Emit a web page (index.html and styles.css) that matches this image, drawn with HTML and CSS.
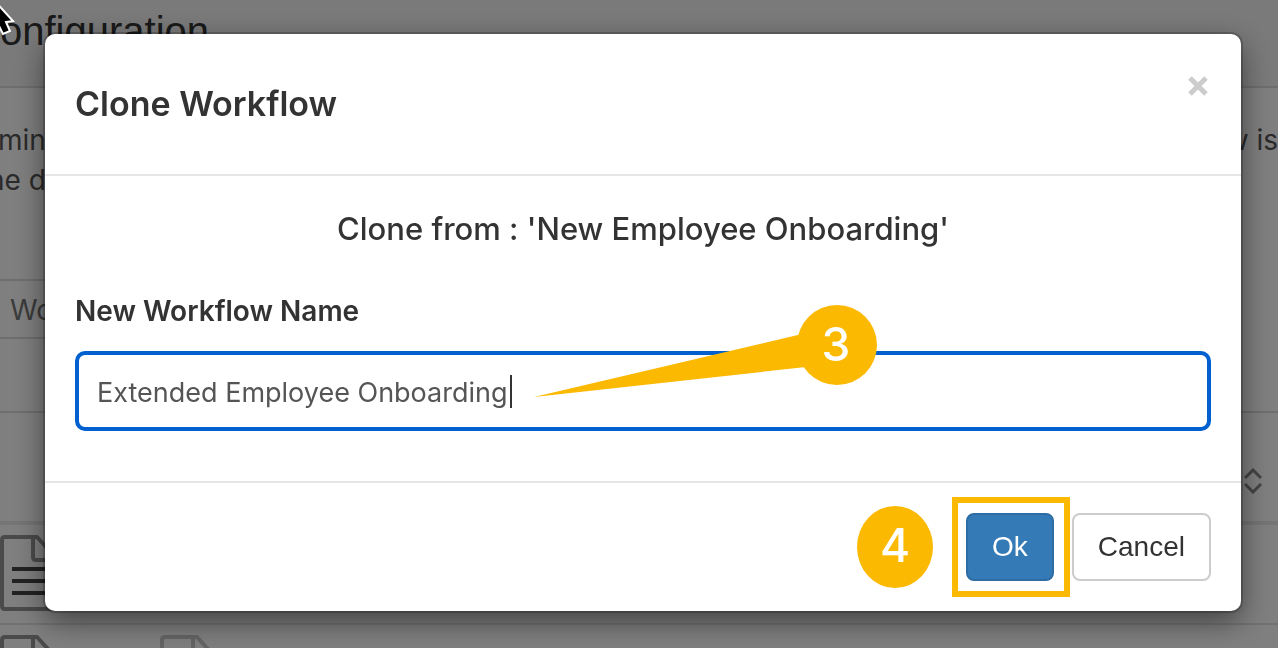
FILE: index.html
```html
<!DOCTYPE html>
<html lang="en">
<head>
    <meta charset="UTF-8">
    <meta name="viewport" content="width=device-width, initial-scale=1.0">
    <title>Workflow Configuration</title>
    <link rel="stylesheet" href="styles.css">
</head>
<body>

    <!-- Page behind the dialog -->
    <div class="page" aria-hidden="true">
        <header class="page-header">
            <h1>onfiguration</h1>
        </header>
        <div class="intro">
            <p>min<br>he d</p>
            <p>w is</p>
        </div>
        <div class="filter">Wo</div>
        <div class="list-head">
            <svg width="18" height="26" viewBox="0 0 18 26" fill="none" stroke="#888" stroke-width="3">
                <path d="M1 10 L9 2 L17 10 M1 16 L9 24 L17 16"/>
            </svg>
        </div>
        <div class="list-row">
            <svg class="doc" viewBox="0 0 60 76">
                <path d="M5 2 H37 L57 24 V71 Q57 74 54 74 H5 Q2 74 2 71 V5 Q2 2 5 2 Z M33 2 V22 Q33 25 36 25 H57"/>
                <path class="lines" d="M12 34 H47 M12 46 H47 M12 58 H47"/>
            </svg>
        </div>
        <div class="list-row">
            <svg class="doc" viewBox="0 0 60 76">
                <path d="M5 2 H37 L57 24 V71 Q57 74 54 74 H5 Q2 74 2 71 V5 Q2 2 5 2 Z M33 2 V22 Q33 25 36 25 H57"/>
                <path class="lines" d="M12 34 H47 M12 46 H47 M12 58 H47"/>
            </svg>
            <svg class="doc light" viewBox="0 0 60 76">
                <path d="M5 2 H37 L57 24 V71 Q57 74 54 74 H5 Q2 74 2 71 V5 Q2 2 5 2 Z M33 2 V22 Q33 25 36 25 H57"/>
            </svg>
        </div>
    </div>

    <div class="backdrop">
        <form class="modal" role="dialog" aria-labelledby="modalTitle">
            <div class="modal-header">
                <h2 id="modalTitle">Clone Workflow</h2>
                <button type="button" class="close" aria-label="Close">
                    <svg width="22" height="22" viewBox="0 0 22 22" stroke="#ccc" stroke-width="5">
                        <path d="M3 3 L19 19 M19 3 L3 19"/>
                    </svg>
                </button>
            </div>
            <div class="modal-body">
                <h3>Clone from : 'New Employee Onboarding'</h3>
                <label for="workflowName">New Workflow Name</label>
                <div class="field">
                    <input type="text" id="workflowName" value="Extended Employee Onboarding">
                    <span class="caret"></span>
                    <div class="callout">
                        <svg width="344" height="80" viewBox="0 0 344 80">
                            <path d="M0 92 L268 29 L272 62 Z" fill="#fcb902"/>
                            <circle cx="303" cy="40" r="40" fill="#fcb902"/>
                        </svg>
                        <span>3</span>
                    </div>
                </div>
            </div>
            <div class="modal-footer">
                <span class="step">4</span>
                <div class="highlight">
                    <button type="submit" class="btn btn-primary">Ok</button>
                </div>
                <button type="button" class="btn">Cancel</button>
            </div>
        </form>
    </div>

    <svg class="pointer" width="16" height="40" viewBox="0 0 16 40">
        <path d="M-8 -2 L13 21 L6 22 L10 31 L3 34 L-4 20 Z" fill="#000" stroke="#fff" stroke-width="2"/>
    </svg>

</body>
</html>
```

FILE: styles.css
```css
* {
    box-sizing: border-box;
}
body {
    font-family: Inter, sans-serif;
    font-size: 28px;
    color: #333;
    background-color: #fff;
    margin: 0;
    height: 100vh;
    overflow: hidden;
}
h1, h2, h3, p {
    margin: 0;
    font-weight: 500;
}

/* Page behind the dialog */
.page {
    height: 100vh;
    overflow: hidden;
}
.page-header {
    height: 88px;
    padding-top: 8px;
    background-color: #f5f5f5;
    border-bottom: 2px solid #ddd;
}
h1 {
    font-family: "Liberation Sans", Arial, sans-serif;
    font-size: 40px;
    line-height: 46px;
    font-weight: 400;
}
.intro {
    display: flex;
    justify-content: space-between;
    height: 191px;
    padding-top: 32px;
    margin-left: -12px;
    color: #555;
}
.intro p {
    line-height: 40px;
    font-weight: 400;
    text-align: right;
}
.filter {
    width: 50%;
    height: 60px;
    padding-left: 10px;
    line-height: 58px;
    color: #777;
    border-top: 2px solid #ddd;
    border-bottom: 2px solid #ddd;
    margin-bottom: 72px;
}
.list-head {
    display: flex;
    justify-content: flex-end;
    align-items: center;
    height: 114px;
    padding: 28px 16px 0 0;
    border-top: 2px solid #ddd;
    border-bottom: 4px solid #eaeaea;
}
.list-row {
    display: flex;
    gap: 100px;
    height: 100px;
    padding-top: 10px;
    border-bottom: 2px solid #e5e5e5;
}
.doc {
    width: 60px;
    height: 76px;
    flex: none;
    fill: none;
    stroke: #959595;
    stroke-width: 4;
    stroke-linejoin: round;
}
.doc .lines {
    stroke: #444;
}
.light {
    opacity: 0.5;
}

/* Dialog */
.backdrop {
    position: fixed;
    inset: 0;
    padding: 34px 37px 0 45px;
    background-color: rgba(0, 0, 0, 0.5);
}
.modal {
    background-color: #fff;
    border-radius: 10px;
    box-shadow: 0 0 0 2px rgba(0, 0, 0, 0.2), 0 10px 30px rgba(0, 0, 0, 0.5);
}
.modal-header {
    display: flex;
    justify-content: space-between;
    align-items: flex-start;
    height: 142px;
    padding: 40px 30px;
    border-bottom: 2px solid #e5e5e5;
}
h2 {
    font-size: 34px;
    line-height: 60px;
    font-weight: 600;
}
.close {
    display: flex;
    padding: 1px 2px;
    background: none;
    border: none;
    cursor: pointer;
}
.modal-body {
    padding: 30px 30px 50px;
}
h3 {
    font-size: 31px;
    line-height: 46px;
    text-align: center;
    margin-bottom: 40px;
}
label {
    display: block;
    line-height: 38px;
    font-weight: 600;
    margin-bottom: 21px;
}
.field {
    position: relative;
}
input {
    display: block;
    width: 100%;
    height: 80px;
    padding: 2px 18px 0;
    font: inherit;
    font-size: 27px;
    color: #555;
    background-color: #fff;
    border: 4px solid #0060d0;
    border-radius: 10px;
    outline: none;
}
.caret {
    position: absolute;
    left: 435px;
    top: 24px;
    width: 2px;
    height: 33px;
    background-color: #333;
}
.callout {
    position: absolute;
    left: 459px;
    top: -46px;
}
.callout svg {
    display: block;
    overflow: visible;
}
.callout span {
    position: absolute;
    right: 2px;
    top: 0;
    width: 80px;
    line-height: 78px;
    text-align: center;
    font-size: 46px;
    font-weight: 500;
    color: #fff;
}
.modal-footer {
    display: flex;
    justify-content: flex-end;
    align-items: center;
    height: 130px;
    padding: 0 30px;
    border-top: 2px solid #e5e5e5;
}
.step {
    width: 76px;
    height: 82px;
    margin-right: 19px;
    border-radius: 50%;
    background-color: #fcb902;
    color: #fff;
    font-size: 46px;
    font-weight: 500;
    line-height: 78px;
    text-align: center;
}
.highlight {
    padding: 10px 10px 10px 8px;
    margin-right: 2px;
    border: 6px solid #fcb902;
}
.btn {
    display: block;
    height: 68px;
    padding: 0 24px;
    font-family: "Liberation Sans", Arial, sans-serif;
    font-size: 28px;
    color: #333;
    background-color: #fff;
    border: 2px solid #ccc;
    border-radius: 8px;
    cursor: pointer;
}
.btn-primary {
    color: #fff;
    background-color: #337ab7;
    border-color: #2e6da4;
}

/* Mouse pointer */
.pointer {
    position: absolute;
    left: 0;
    top: 0;
}
```
